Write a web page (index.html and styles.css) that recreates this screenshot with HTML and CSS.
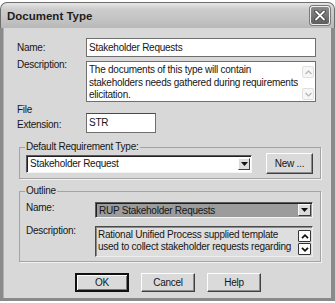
FILE: index.html
```html
<!DOCTYPE html>
<html lang="en">
<head>
    <meta charset="UTF-8">
    <title>Document Type</title>
    <link rel="stylesheet" href="styles.css">
</head>
<body>
    <div class="window">
        <div class="titlebar">
            <span class="title">Document Type</span>
            <span class="close-btn">
                <svg width="12" height="11" viewBox="0 0 12 11">
                    <path d="M2 1.5 L10 9.5 M10 1.5 L2 9.5" stroke="#3a3a3a" stroke-width="3.4" stroke-linecap="round"/>
                    <path d="M2 1.5 L10 9.5 M10 1.5 L2 9.5" stroke="#fff" stroke-width="1.8" stroke-linecap="round"/>
                </svg>
            </span>
        </div>

        <div class="dialog-body">
            <div class="field-row name-row">
                <div class="field-label">Name:</div>
                <div class="textbox">Stakeholder Requests</div>
            </div>

            <div class="field-row desc-row">
                <div class="field-label">Description:</div>
                <div class="textbox multiline">
                    <div class="box-text">The documents of this type will contain<br>stakeholders needs gathered during requirements<br>elicitation.</div>
                    <div class="scrollbar faded">
                        <span class="scroll-btn"><svg width="7" height="5" viewBox="0 0 7 5"><path d="M0.5 4 L3.5 1 L6.5 4" fill="none" stroke="#b4b4b4" stroke-width="1.2"/></svg></span>
                        <span class="scroll-btn"><svg width="7" height="5" viewBox="0 0 7 5"><path d="M0.5 1 L3.5 4 L6.5 1" fill="none" stroke="#b4b4b4" stroke-width="1.2"/></svg></span>
                    </div>
                </div>
            </div>

            <div class="field-row ext-row">
                <div class="field-label">File<br>Extension:</div>
                <div class="textbox short">STR</div>
            </div>

            <fieldset class="group req-group">
                <legend>Default Requirement Type:</legend>
                <div class="group-line">
                    <div class="combo">
                        <span class="combo-text">Stakeholder Request</span>
                        <span class="drop-btn"><svg width="7" height="4" viewBox="0 0 7 4"><path d="M0 0 H7 L3.5 4 Z" fill="#111"/></svg></span>
                    </div>
                    <button class="push-btn new-btn">New ...</button>
                </div>
            </fieldset>

            <fieldset class="group outline-group">
                <legend>Outline</legend>
                <div class="field-row">
                    <div class="field-label">Name:</div>
                    <div class="combo selected">
                        <span class="combo-text">RUP Stakeholder Requests</span>
                        <span class="drop-btn"><svg width="7" height="4" viewBox="0 0 7 4"><path d="M0 0 H7 L3.5 4 Z" fill="#111"/></svg></span>
                    </div>
                </div>
                <div class="field-row outline-desc">
                    <div class="field-label">Description:</div>
                    <div class="textbox multiline readonly">
                        <div class="box-text">Rational Unified Process supplied template<br>used to collect stakeholder requests regarding</div>
                        <div class="scrollbar">
                            <span class="scroll-btn"><svg width="8" height="5" viewBox="0 0 8 5"><path d="M1 4.2 L4 1.2 L7 4.2" fill="none" stroke="#111" stroke-width="1.7"/></svg></span>
                            <span class="scroll-btn"><svg width="8" height="5" viewBox="0 0 8 5"><path d="M1 0.8 L4 3.8 L7 0.8" fill="none" stroke="#111" stroke-width="1.7"/></svg></span>
                        </div>
                    </div>
                </div>
            </fieldset>

            <div class="button-row">
                <button class="push-btn default">OK</button>
                <button class="push-btn">Cancel</button>
                <button class="push-btn">Help</button>
            </div>
        </div>
    </div>
</body>
</html>
```

FILE: styles.css
```css
body {
    margin: 0;
    background: #fff;
    font-family: 'Liberation Sans', Arial, sans-serif;
    font-size: 10px;
    letter-spacing: -0.25px;
    color: #161616;
}

.window {
    width: 335px;
    height: 299px;
    margin-top: 2px;
    display: flex;
    flex-direction: column;
}

/* title bar */
.titlebar {
    height: 26px;
    box-sizing: border-box;
    border: 1px solid #6e6e6e;
    border-bottom: none;
    border-radius: 7px 7px 0 0;
    background: linear-gradient(#e6e6e6 0%, #cdcdcd 25%, #c2c2c2 70%, #b8b8b8 100%);
    display: flex;
    align-items: center;
    justify-content: space-between;
    padding: 0 4px 0 6px;
}

.title {
    font-size: 11.5px;
    font-weight: bold;
    letter-spacing: 0;
    color: #1e1e1e;
    padding-top: 1px;
}

.close-btn {
    width: 18px;
    height: 17px;
    border: 1px solid #efefef;
    border-radius: 3px;
    background: linear-gradient(#8a8a8a, #5e5e5e);
    display: flex;
    align-items: center;
    justify-content: center;
    box-shadow: 0 0 0 1px #7a7a7a;
}

/* dialog body */
.dialog-body {
    flex: 1;
    background: #d8d8d8;
    border: 3px solid #8a8a8a;
    border-top: none;
    border-right-width: 4px;
    box-shadow: inset 1px 0 0 #b0b0b0;
    padding: 10px 15px 0 14px;
}

.field-row {
    display: flex;
}

.field-label {
    width: 69px;
    flex: none;
    line-height: 12px;
}

.name-row {
    align-items: center;
}

.textbox {
    background: #fff;
    border: 1px solid #6f6f6f;
    box-sizing: border-box;
    width: 230px;
    height: 19px;
    line-height: 17px;
    padding-left: 2px;
}

.desc-row {
    margin-top: 4px;
}

.desc-row .field-label {
    margin-top: -2px;
}

.multiline {
    height: 41px;
    display: flex;
    justify-content: space-between;
    padding: 2px 1px 0 2px;
}

.box-text {
    line-height: 12.5px;
    white-space: nowrap;
    overflow: hidden;
}

.scrollbar {
    width: 12px;
    flex: none;
    display: flex;
    flex-direction: column;
    justify-content: space-between;
    padding: 2px 0 1px;
}

.scrollbar .scroll-btn {
    height: 10px;
    border: 1px solid #e0e0e0;
    border-radius: 2px;
    background: #f6f6f6;
    display: flex;
    align-items: center;
    justify-content: center;
}

.ext-row .field-label {
    line-height: 15px;
}

.textbox.short {
    width: 70px;
    height: 20px;
    margin-top: 11px;
    border-top-color: #4a4a4a;
    line-height: 18px;
}

/* group boxes */
.group {
    margin: 8px -5px 0 2px;
    padding: 0 6px 4px;
    border: 1px solid #a4a4a4;
    box-shadow: 1px 1px 0 #f2f2f2;
    min-width: 0;
}

.group legend {
    padding: 0 1px;
    margin-left: -1px;
    line-height: 12px;
}

.group-line {
    display: flex;
    align-items: center;
    gap: 14px;
}

.combo {
    width: 226px;
    height: 18px;
    box-sizing: border-box;
    background: #fff;
    border: 1px solid;
    border-color: #5a5a5a #f4f4f4 #f4f4f4 #5a5a5a;
    box-shadow: inset 1px 1px 0 #202020;
    display: flex;
    align-items: center;
    justify-content: space-between;
    padding: 0 1px 0 3px;
}

.drop-btn {
    width: 12px;
    height: 12px;
    box-sizing: border-box;
    background: #dcdcdc;
    border: 1px solid;
    border-color: #fbfbfb #3c3c3c #3c3c3c #fbfbfb;
    display: flex;
    align-items: center;
    justify-content: center;
}

.push-btn {
    font-family: inherit;
    font-size: 10px;
    letter-spacing: inherit;
    color: #161616;
    background: #dadada;
    border: 1px solid;
    border-color: #fdfdfd #404040 #404040 #fdfdfd;
    box-shadow: inset -1px -1px 0 #8c8c8c;
    padding: 0;
    width: 54px;
    height: 19px;
}

.new-btn {
    width: 47px;
    height: 21px;
}

.outline-group {
    margin-top: 6px;
    padding-top: 5px;
}

.combo.selected {
    width: 218px;
    height: 16px;
    background: #9c9c9c;
    padding-left: 3px;
}

.combo.selected .drop-btn {
    width: 13px;
    height: 12px;
}

.outline-desc {
    margin-top: 8px;
}

.outline-desc .field-label {
    margin-top: -1px;
}

.readonly {
    width: 218px;
    height: 31px;
    background: #dedede;
    border-color: #4a4a4a #eeeeee #eeeeee #4a4a4a;
    box-shadow: inset 1px 1px 0 #8a8a8a;
    padding: 2px 1px 0 2px;
}

.readonly .box-text {
    line-height: 12px;
}

.readonly .scrollbar {
    width: 13px;
    gap: 1px;
    justify-content: flex-start;
    padding: 1px 0 0;
}

.readonly .scroll-btn {
    height: 12px;
    box-sizing: border-box;
    background: #fbfbfb;
    border: 1px solid #333;
    border-radius: 1px;
}

/* bottom buttons */
.button-row {
    display: flex;
    justify-content: center;
    gap: 12px;
    margin-top: 11px;
    padding-left: 3px;
}

.push-btn.default {
    border: 2px solid #111;
    box-shadow: inset 1px 1px 0 #fff, inset -1px -1px 0 #777;
}
```
